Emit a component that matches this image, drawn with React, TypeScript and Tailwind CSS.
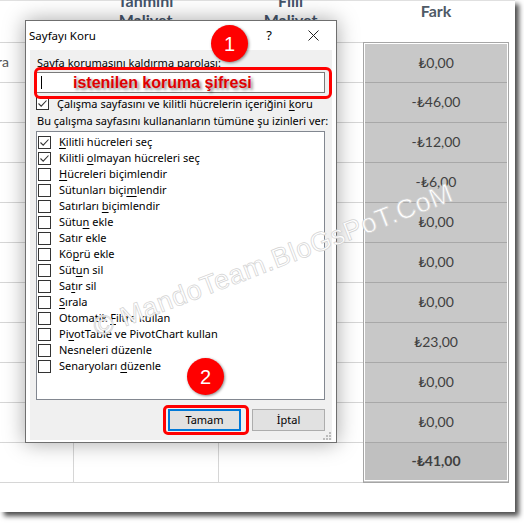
import React from "react";

const ui = { fontFamily: "'Noto Sans', 'DejaVu Sans', sans-serif" };
const cell = { fontFamily: "Lato, 'DejaVu Sans', sans-serif" };

function U({ t, i }: { t: string; i: number }) {
  if (i < 0) return <>{t}</>;
  return (
    <>
      {t.slice(0, i)}
      <span className="underline underline-offset-2">{t[i]}</span>
      {t.slice(i + 1)}
    </>
  );
}

function Box({ checked }: { checked?: boolean }) {
  return (
    <span className="flex h-[13px] w-[13px] shrink-0 items-center justify-center border border-[#333] bg-white">
      {checked && (
        <svg width="11" height="11" viewBox="0 0 11 11">
          <path d="M1.5 5.5 L4.2 8.2 L9.5 2.5" fill="none" stroke="#333" strokeWidth="1.1" />
        </svg>
      )}
    </span>
  );
}

const items: [string, number, boolean][] = [
  ["Kilitli hücreleri seç", 0, true],
  ["Kilitli olmayan hücreleri seç", 8, true],
  ["Hücreleri biçimlendir", 0, false],
  ["Sütunları biçimlendir", 14, false],
  ["Satırları biçimlendir", 10, false],
  ["Sütun ekle", 4, false],
  ["Satır ekle", -1, false],
  ["Köprü ekle", 2, false],
  ["Sütun sil", 3, false],
  ["Satır sil", 2, false],
  ["Sırala", 0, false],
  ["Otomatik Filtre kullan", 9, false],
  ["PivotTable ve PivotChart kullan", 2, false],
  ["Nesneleri düzenle", -1, false],
  ["Senaryoları düzenle", 12, false],
];

const values = [
  "₺0,00",
  "-₺46,00",
  "-₺12,00",
  "-₺6,00",
  "₺0,00",
  "₺0,00",
  "₺0,00",
  "₺23,00",
  "₺0,00",
  "₺0,00",
];

function Circle({ n, cls }: { n: string; cls: string }) {
  return (
    <div
      className={`absolute flex h-[37px] w-[37px] items-center justify-center rounded-full bg-[#ff0000] text-[20px] text-white shadow-[1px_1px_3px_rgba(0,0,0,0.45)] ${cls}`}
      style={{ fontFamily: "'Liberation Sans', Arial, sans-serif" }}
    >
      {n}
    </div>
  );
}

export default function App() {
  return (
    <div className="h-[523px] w-[524px] bg-white">
      <div className="relative h-[512px] w-[515px] overflow-hidden bg-white shadow-[4px_4px_5px_rgba(0,0,0,0.7)]">
        {/* spreadsheet */}
        <div className="flex flex-col" style={cell}>
          <div className="flex h-[42px] border-t border-[#e0e0e0] text-[16px] font-bold text-[#44546a]">
            <div className="w-[73px]" />
            <div className="-mt-[10px] flex w-[145px] flex-col items-center leading-[19px]">
              <span>Tahmini</span>
              <span>Maliyet</span>
            </div>
            <div className="-mt-[10px] flex w-[145px] flex-col items-center leading-[19px]">
              <span>Fiili</span>
              <span>Maliyet</span>
            </div>
            <div className="-mt-[2px] flex w-[146px] justify-center text-[#4f5a66]">Fark</div>
          </div>
          <div className="flex">
            <div className="flex w-[363px] flex-col">
              {Array.from({ length: 11 }).map((_, i) => (
                <div key={i} className="flex h-[40px] border-t border-[#d6d6d6]">
                  <div className="flex w-[73px] items-center pb-[2px] text-[14px] text-[#555]">
                    {i === 0 ? <span className="-ml-[3px]">ra</span> : null}
                  </div>
                  <div className="w-[145px] border-l border-[#d6d6d6]" />
                  <div className="w-[145px] border-l border-[#d6d6d6]" />
                </div>
              ))}
              <div className="border-t border-[#d6d6d6]" />
            </div>
            <div className="w-[146px] border border-[#a6a6a6] bg-[#c8c8c8]">
              <div className="border border-white">
                {values.map((v, i) => (
                  <div
                    key={i}
                    className={`flex items-center justify-center pb-[2px] text-[14px] text-[#404040] ${i > 0 ? "h-[40px] border-t border-[#a8a8a8]" : "h-[38px]"}`}
                  >
                    {v}
                  </div>
                ))}
                <div className="flex h-[38px] items-center justify-center border-t border-[#a8a8a8] bg-[#c0c0c0] pb-[2px] text-[14px] font-bold text-[#404040]">
                  -₺41,00
                </div>
              </div>
            </div>
          </div>
        </div>

        {/* watermark */}
        <div
          className="pointer-events-none absolute left-[82px] top-[240px] z-20 origin-center -rotate-[21deg] whitespace-nowrap text-[27px] text-white"
          style={{
            fontFamily: "'Liberation Sans', Arial, sans-serif",
            WebkitTextStroke: "0.7px #d2d2d2",
            letterSpacing: "0.6px",
          }}
        >
          © MandoTeam.BloGsPoT.CoM
        </div>

        {/* dialog */}
        <div
          className="absolute left-[25px] top-[20px] z-10 flex h-[423px] w-[312px] flex-col border border-[#6f6f6f] bg-white text-[11px] text-black shadow-[0_0_20px_rgba(0,0,0,0.35)]"
          style={ui}
        >
          <div className="flex h-[29px] shrink-0 items-center pl-[3px] text-[11.5px]">
            <span>Sayfayı Koru</span>
            <span className="ml-auto mr-[36px] text-[13px]">?</span>
            <svg className="mr-[17px]" width="11" height="11" viewBox="0 0 11 11">
              <path d="M0.5 0.5 L10.5 10.5 M10.5 0.5 L0.5 10.5" stroke="#222" strokeWidth="1" />
            </svg>
          </div>
          <div className="mx-[4px] mb-[4px] flex flex-1 flex-col bg-[#f0f0f0] px-[6px]">
            <div className="mt-[4px] h-[17px] pl-[1px] leading-[17px]">
              Sayfa korumasını kaldırma <U t="parolası:" i={0} />
            </div>
            <div className="mt-[1px] flex h-[21px] w-[289px] items-center border border-[#7a7a7a] bg-white pl-[4px]">
              <span className="h-[13px] w-px bg-black" />
            </div>
            <div className="mt-[4px] flex h-[13px] items-center gap-[8px]">
              <Box checked />
              <span className="whitespace-nowrap leading-[14px]">
                Çalışma sayfasını ve kilitli hücrelerin içeriğini <U t="koru" i={0} />
              </span>
            </div>
            <div className="mt-[3px] h-[16px] whitespace-nowrap pl-[1px] leading-[16px]">
              Bu çalışma sayfasını kullananların tümüne şu izinleri ver:
            </div>
            <div className="mt-[2px] flex h-[269px] w-[289px] flex-col border border-[#828790] bg-white pl-[1px] pt-[2px]">
              {items.map(([t, u, c], i) => (
                <div key={i} className="flex h-[16px] items-center gap-[8px]">
                  <Box checked={c} />
                  <span className="whitespace-nowrap leading-[16px]">
                    <U t={t} i={u} />
                  </span>
                </div>
              ))}
            </div>
            <div className="mt-[9px] flex justify-end gap-[11px] pr-[1px]">
              <button className="flex h-[22px] w-[73px] items-center justify-center border-2 border-[#0078d7] bg-[#e1e1e1] text-[11px]">
                Tamam
              </button>
              <button className="flex h-[22px] w-[73px] items-center justify-center border border-[#adadad] bg-[#e1e1e1] text-[11px]">
                İptal
              </button>
            </div>
            <div className="ml-auto mr-[-5px] mt-[1px] grid grid-cols-3 gap-[1px]">
              <span />
              <span />
              <span className="h-[2px] w-[2px] bg-[#bcbcbc]" />
              <span />
              <span className="h-[2px] w-[2px] bg-[#bcbcbc]" />
              <span className="h-[2px] w-[2px] bg-[#bcbcbc]" />
              <span className="h-[2px] w-[2px] bg-[#bcbcbc]" />
              <span className="h-[2px] w-[2px] bg-[#bcbcbc]" />
              <span className="h-[2px] w-[2px] bg-[#bcbcbc]" />
            </div>
          </div>
        </div>

        {/* annotations */}
        <div className="absolute left-[34px] top-[67px] z-30 flex h-[32px] w-[298px] items-center rounded-[6px] border-[3px] border-[#ff0000] pl-[36px]">
          <span
            className="text-[16px] font-bold text-[#e00000]"
            style={{
              fontFamily: "'Liberation Sans', Arial, sans-serif",
              textShadow: "2px 2px 3px rgba(0,0,0,0.45)",
            }}
          >
            istenilen koruma şifresi
          </span>
        </div>
        <div className="absolute left-[163px] top-[405px] z-30 h-[30px] w-[86px] rounded-[5px] border-[3px] border-[#ff0000]" />
        <Circle n="1" cls="left-[211px] top-[25px] z-30" />
        <Circle n="2" cls="left-[187px] top-[358px] z-30" />
      </div>
    </div>
  );
}
